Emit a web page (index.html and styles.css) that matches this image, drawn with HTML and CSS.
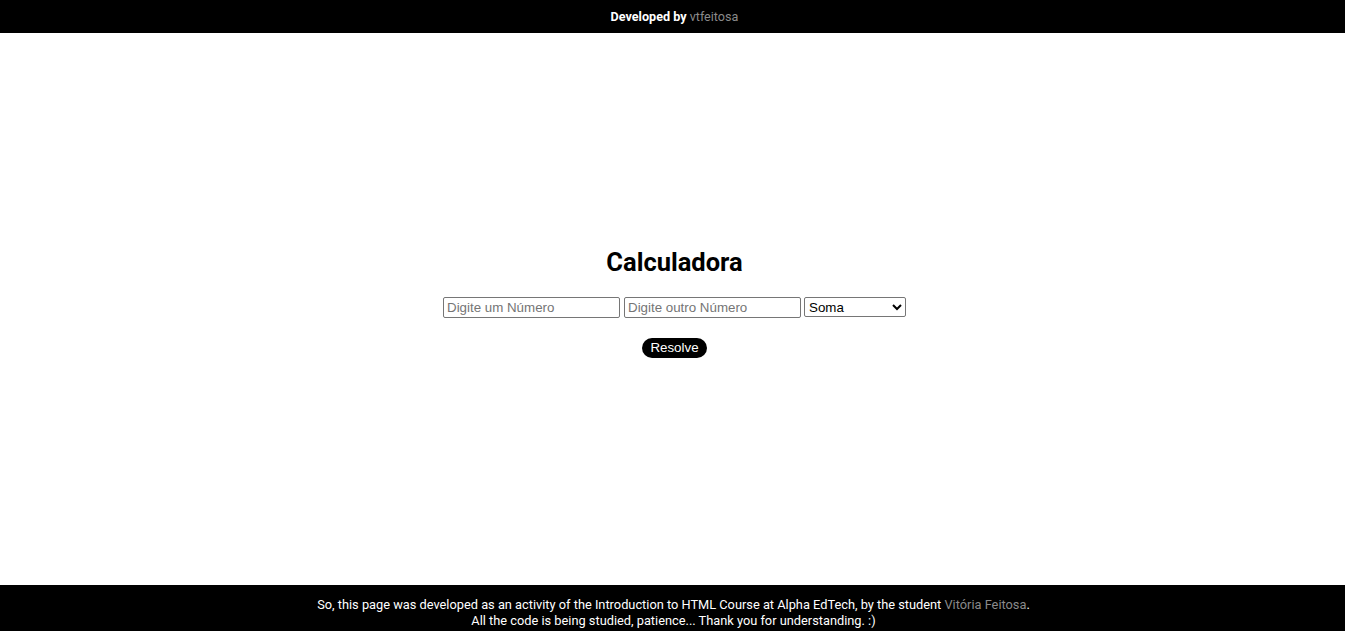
FILE: index.html
```html
<!DOCTYPE html>
<html lang="pt">
<head>
<meta charset="utf-8">
<title>Calculadora</title>
<link rel="stylesheet" href="styles.css">
</head>
<body>
<header class="topbar"><span class="by">Developed by</span>&nbsp;<a class="muted" href="#">vtfeitosa</a></header>
<main class="content">
  <h1 class="title">Calculadora</h1>
  <div class="form-row">
    <input class="num" type="text" placeholder="Digite um Número">
    <input class="num" type="text" placeholder="Digite outro Número">
    <select class="op">
      <option>Soma</option>
      <option>Subtração</option>
      <option>Multiplicação</option>
      <option>Divisão</option>
    </select>
  </div>
  <button class="solve" type="button">Resolve</button>
</main>
<footer class="bottombar">
  <p>So, this page was developed as an activity of the Introduction to HTML Course at Alpha EdTech, by the student <a class="muted" href="#">Vitória Feitosa</a>.</p>
  <p>All the code is being studied, patience... Thank you for understanding. :)</p>
</footer>
</body>
</html>
```
FILE: styles.css
```css
* { box-sizing: border-box; }
html, body { margin: 0; padding: 0; }
body {
  font-family: Roboto, "Liberation Sans", Arial, sans-serif;
  min-height: 100vh;
  display: flex;
  flex-direction: column;
  background: #fff;
  color: #000;
}
.topbar {
  background: #000;
  color: #fff;
  height: 33px;
  display: flex;
  align-items: center;
  justify-content: center;
  font-size: 12.6px;
  padding-left: 4px;
  padding-bottom: 1px;
}
.by { font-weight: 700; }
.muted { color: #8a8a8a; text-decoration: none; font-weight: 400; }
.content {
  flex: 1;
  display: flex;
  flex-direction: column;
  align-items: center;
  justify-content: center;
  padding-left: 4px;
  padding-bottom: 14px;
}
.title {
  font-size: 25.5px;
  font-weight: 700;
  margin: 0 0 20px;
  line-height: 30px;
}
.form-row {
  display: flex;
  gap: 4px;
  align-items: center;
}
.num {
  width: 177px;
  height: 21px;
  border: 1px solid #767676;
  border-radius: 2px;
  padding: 1px 3px;
  font-family: "Liberation Sans", Arial, sans-serif;
  font-size: 13.33px;
}
.num::placeholder { color: #757575; }
.op {
  width: 102px;
  height: 20px;
  border: 1px solid #767676;
  border-radius: 2px;
  font-family: "Liberation Sans", Arial, sans-serif;
  font-size: 13.33px;
  background: #fff;
  color: #000;
  margin-left: -1px;
}
.solve {
  margin-top: 20px;
  background: #000;
  color: #fff;
  border: none;
  border-radius: 10px;
  height: 20px;
  width: 65px;
  font-family: "Liberation Sans", Arial, sans-serif;
  font-size: 13.33px;
  padding: 0;
}
.bottombar {
  background: #000;
  color: #fff;
  height: 46px;
  display: flex;
  flex-direction: column;
  align-items: center;
  justify-content: center;
  font-size: 12.8px;
  line-height: 16px;
  padding-top: 9px;
  padding-left: 2px;
}
.bottombar p { margin: 0; }
```
